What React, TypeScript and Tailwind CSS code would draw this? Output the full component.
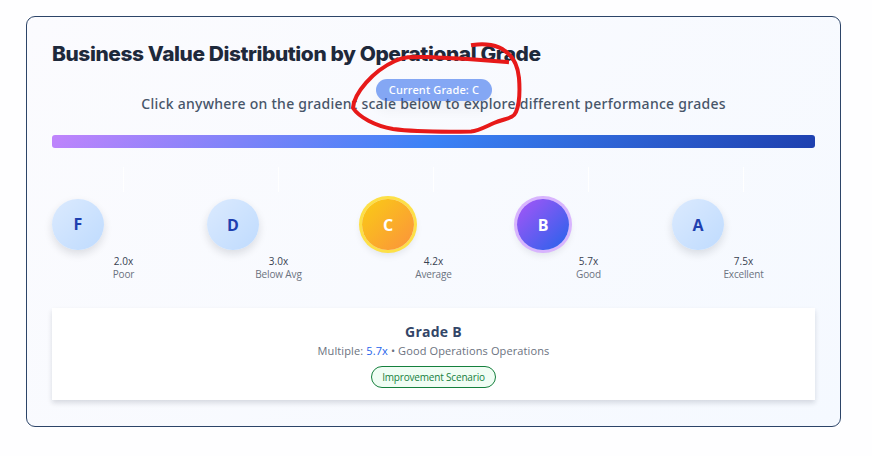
const grades = [
  { letter: "F", multiple: "2.0x", label: "Poor", tone: "bg-linear-[135deg] from-[#dbeafe] to-[#bfdbfe] pb-0.5 text-[#1e40af]" },
  { letter: "D", multiple: "3.0x", label: "Below Avg", tone: "bg-linear-[135deg] from-[#dbeafe] to-[#bfdbfe] text-[#1e40af]" },
  { letter: "C", multiple: "4.2x", label: "Average", tone: "bg-linear-[135deg] from-[#facc15] to-[#fb923c] text-white ring-3 ring-[#fde047]" },
  { letter: "B", multiple: "5.7x", label: "Good", tone: "bg-linear-[135deg] from-[#a855f7] to-[#2563eb] text-white ring-3 ring-[#d8b4fe]" },
  { letter: "A", multiple: "7.5x", label: "Excellent", tone: "bg-linear-[135deg] from-[#dbeafe] to-[#bfdbfe] text-[#1e40af]" },
];

function GradeScale() {
  return (
    <div className="mt-[19px] grid grid-cols-5 gap-3">
      {grades.map((g) => (
        <div key={g.letter} className="flex flex-col">
          <div className="h-[25px] w-px self-center bg-white" />
          <button
            className={`mt-[7px] flex h-[51px] w-[52px] items-center justify-center rounded-full text-[16px] font-bold shadow-[0_4px_8px_rgba(15,23,42,0.13)] ${g.tone}`}
          >
            {g.letter}
          </button>
          <div className="mt-[5px] text-center text-[10px] leading-[13px]">
            <div className="text-[#374151]">{g.multiple}</div>
            <div className="tracking-[-0.15px] text-[#6b7280]">{g.label}</div>
          </div>
        </div>
      ))}
    </div>
  );
}

function Annotation() {
  return (
    <svg className="pointer-events-none absolute top-0 left-0" width="872" height="456" fill="none">
      <path
        d="M473 45C485 43 498 45 505 51C514 57 518 67 519 78C520 91 519 105 516 112C513 119 506 118 494 123C485 127 478 131 471 131.5C440 132 408 131 393 129C375 126 359 117 353 108C354 93 373 71 395 61C405 56 415 57 427 57C455 58 485 60 507 62"
        stroke="#e71919"
        strokeWidth="4"
        strokeLinecap="square"
        strokeLinejoin="round"
      />
    </svg>
  );
}

export default function App() {
  return (
    <div className="relative h-[456px] w-[872px] overflow-hidden bg-[#fefeff] px-[26px] pt-4 font-['Open_Sans','Noto_Sans',sans-serif]">
      <section className="h-[411px] w-[815px] rounded-[9px] border border-[#2c4468] bg-linear-[135deg] from-[#fbfbfe] to-[#f5f9ff] px-[25px] pt-[23px]">
        <h2 className="h-7 w-fit origin-left scale-x-[1.046] whitespace-nowrap font-['Inter',sans-serif] text-[20px] leading-7 font-extrabold tracking-[-0.4px] text-[#1e293b]">
          Business Value Distribution by Operational Grade
        </h2>
        <div className="relative mt-[26px]">
          <p className="text-center font-['Noto_Sans',sans-serif] text-[14px] leading-5 font-medium tracking-[0.27px] whitespace-nowrap text-[#475569]">
            Click anywhere on the gradient scale below to explore different performance grades
          </p>
          <div className="absolute -top-[15px] left-[324px] flex h-[22px] w-[116px] items-center justify-center rounded-full bg-[#2563eb]/55 font-['Noto_Sans',sans-serif] text-[11px] font-medium tracking-[0.15px] whitespace-nowrap text-white shadow-[0_10px_12px_rgba(15,23,42,0.04)]">
            Current Grade: C
          </div>
        </div>
        <div className="mt-[21px] h-[13px] rounded-[3px] bg-linear-[135deg] from-[#c084fc] via-[#3b82f6] to-[#1e40af]" />
        <GradeScale />
        <div className="mt-[27px] flex h-[92px] flex-col items-center bg-white pt-[14px] shadow-[0_3px_5px_rgba(15,23,42,0.14)]">
          <div className="text-[14px] leading-5 font-bold tracking-[0.25px] text-[#334668]">Grade B</div>
          <div className="text-[11px] leading-[18px] tracking-[0.11px] text-[#6b7280]">
            Multiple: <span className="font-medium text-[#2563eb]">5.7x</span> • Good Operations Operations
          </div>
          <div className="mt-[6px] flex h-[22px] w-[125px] items-center justify-center rounded-full border border-[#15803d] bg-[#f0fdf4] text-[10px] font-medium tracking-[-0.18px] whitespace-nowrap text-[#15803d]">
            Improvement Scenario
          </div>
        </div>
      </section>
      <Annotation />
    </div>
  );
}
